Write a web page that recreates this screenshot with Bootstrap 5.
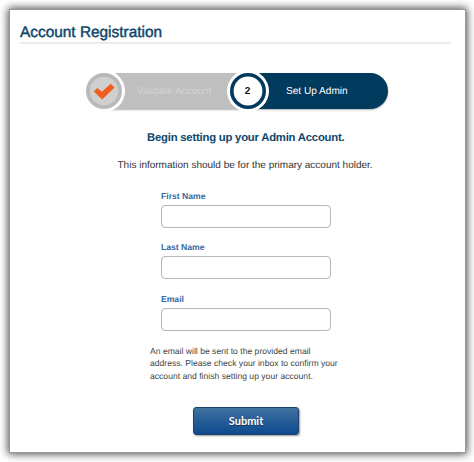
<!DOCTYPE html>
<html lang="en">
<head>
<meta charset="utf-8">
<meta name="viewport" content="width=device-width, initial-scale=1">
<title>Account Registration</title>
<link href="https://cdn.jsdelivr.net/npm/bootstrap@5.3.0/dist/css/bootstrap.min.css" rel="stylesheet">
<style>
body{font-family:"Liberation Sans",Arial,sans-serif;background:#fff;height:462px;overflow:hidden;color:#333;text-rendering:geometricPrecision}
.panel{margin:9px 8px 0 9px;height:444px;border:1px solid #989898;box-shadow:0 0 8px 1px rgba(0,0,0,.72);padding:12px 14px 0 10px}
.page-title{font-size:15.4px;-webkit-text-stroke:.45px #0d4669;line-height:21px;height:22px;color:#0d4669;border-bottom:2px solid #ebebeb;margin:0;white-space:nowrap}
.steps{width:302px;height:36px;margin:29px 0 0 66px;border-radius:18px;background:#bfbfbf;box-shadow:0 1px 2px rgba(0,0,0,.3);font-size:10.1px;line-height:37px}
.step-disc{width:42px;height:42px;flex:none;border-radius:50%;background:#fff;padding:3px;margin:-3px 0}
.step-disc svg{display:block}
.step-done{width:158px;color:#d3d3d3;margin-left:-3px}
.step-now{width:161px;color:#fff;margin-left:-14px}
.step-now .bar{background:#003a5d;border-radius:0 18px 18px 0;margin-left:-21px;padding-left:38px;height:36px}
.step-now .step-disc{z-index:1}
.intro{font-size:11.3px;letter-spacing:-.21px;line-height:14px;color:#0d4669;margin:22px 0 0 127px;white-space:nowrap}
.note{font-size:10px;line-height:14px;margin:14px 0 0 97.5px;white-space:nowrap}
.fields{width:170px;margin:18px 0 0 141px}
.field{height:51.4px}
.field label{font-size:8.6px;line-height:11px;font-weight:700;color:#36699f;margin-bottom:3px}
.field .form-control{height:23px;min-height:0;border:1px solid #b9b9b9;border-radius:4px;padding:2px 6px;font-size:10px;box-shadow:inset 0 0 1px #ccc}
.help{font-size:8.6px;line-height:12.2px;margin:0 0 0 130px;white-space:nowrap;color:#444}
.btn-send{width:106px;height:28px;margin:25px 0 0 173px;padding:0;font:700 11px/26px Lato,sans-serif;color:#fff;border:1px solid #1b416f;border-radius:3px;background:linear-gradient(#41719f,#0e4a8e);box-shadow:1px 1px 2px rgba(0,0,0,.4);text-shadow:0 1px 1px rgba(0,0,0,.4)}
</style>
<script src="https://cdn.jsdelivr.net/npm/bootstrap@5.3.0/dist/js/bootstrap.bundle.min.js"></script>
</head>
<body>
<main class="panel bg-white">
<h1 class="page-title fw-normal">Account Registration</h1>
<div class="steps d-flex">
<div class="step-done d-flex flex-shrink-0">
<div class="step-disc"><svg width="36" height="36" viewBox="0 0 36 36"><circle cx="18" cy="18" r="18" fill="#b9b9b9"/><circle cx="18" cy="18" r="14.3" fill="#cfcfcf"/><path d="M7.8 18.6 11.3 15 16 18.8 24.6 10.8 28.6 14.6 16.2 26.5Z" fill="#f15d1e"/></svg></div>
<span class="done-text ms-2 ps-1">Validate Account</span>
</div>
<div class="step-now d-flex flex-shrink-0">
<div class="step-disc position-relative"><svg width="36" height="36" viewBox="0 0 36 36"><circle cx="18" cy="18" r="16.2" fill="#fff" stroke="#003a5d" stroke-width="3.6"/><text x="17.5" y="21.3" text-anchor="middle" font-size="10" font-weight="700" fill="#111">2</text></svg></div>
<div class="bar flex-grow-1">Set Up Admin</div>
</div>
</div>
<h2 class="intro fw-bold">Begin setting up your Admin Account.</h2>
<p class="note">This information should be for the primary account holder.</p>
<form class="mb-0">
<div class="fields">
<div class="field"><label class="d-block" for="first">First Name</label><input class="form-control" id="first" type="text"></div>
<div class="field"><label class="d-block" for="last">Last Name</label><input class="form-control" id="last" type="text"></div>
<div class="field"><label class="d-block" for="email">Email</label><input class="form-control" id="email" type="email"></div>
</div>
<p class="help">An email will be sent to the provided email<br>address. Please check your inbox to confirm your<br>account and finish setting up your account.</p>
<button class="btn btn-send d-block" type="button">Submit</button>
</form>
</main>
</body>
</html>
